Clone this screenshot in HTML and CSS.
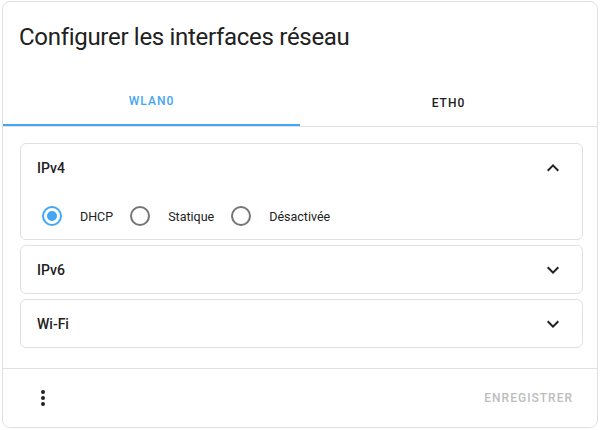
FILE: index.html
```html
<!DOCTYPE html>
<html lang="fr">
<head>
<meta charset="utf-8">
<link rel="stylesheet" href="styles.css">
</head>
<body>
<div class="dialog">
  <h2 class="title">Configurer les interfaces réseau</h2>
  <div class="tabs">
    <div class="tab active">WLAN0</div>
    <div class="tab">ETH0</div>
  </div>
  <div class="content">
    <div class="panel">
      <div class="panel-header">
        <span>IPv4</span>
        <svg class="chev" viewBox="0 0 24 24"><path d="M7.41 15.41L12 10.83l4.59 4.58L18 14l-6-6-6 6z"/></svg>
      </div>
      <div class="panel-body">
        <label class="radio"><span class="circle checked"></span><span class="lbl">DHCP</span></label>
        <label class="radio"><span class="circle"></span><span class="lbl">Statique</span></label>
        <label class="radio"><span class="circle"></span><span class="lbl">Désactivée</span></label>
      </div>
    </div>
    <div class="panel">
      <div class="panel-header">
        <span>IPv6</span>
        <svg class="chev" viewBox="0 0 24 24"><path d="M16.59 8.59L12 13.17 7.41 8.59 6 10l6 6 6-6z"/></svg>
      </div>
    </div>
    <div class="panel">
      <div class="panel-header">
        <span>Wi-Fi</span>
        <svg class="chev" viewBox="0 0 24 24"><path d="M16.59 8.59L12 13.17 7.41 8.59 6 10l6 6 6-6z"/></svg>
      </div>
    </div>
  </div>
  <div class="footer">
    <svg class="dots" viewBox="0 0 24 24"><path d="M12,16A2,2 0 0,1 14,18A2,2 0 0,1 12,20A2,2 0 0,1 10,18A2,2 0 0,1 12,16M12,10A2,2 0 0,1 14,12A2,2 0 0,1 12,14A2,2 0 0,1 10,12A2,2 0 0,1 12,10M12,4A2,2 0 0,1 14,6A2,2 0 0,1 12,8A2,2 0 0,1 10,6A2,2 0 0,1 12,4Z"/></svg>
    <button class="save" disabled>ENREGISTRER</button>
  </div>
</div>
</body>
</html>
```

FILE: styles.css
```css
html, body {
  margin: 0;
  padding: 0;
  background: #fff;
}
body {
  font-family: Roboto, "Liberation Sans", sans-serif;
  color: #212121;
}
.dialog {
  margin: 1px 0 0 2px;
  width: 596px;
  height: 427px;
  box-sizing: border-box;
  border: 1px solid #e0e0e0;
  border-radius: 8px;
  background: #fff;
  display: flex;
  flex-direction: column;
}
.title {
  margin: 0;
  padding: 19px 16px 0;
  font-size: 24px;
  font-weight: 400;
  line-height: 32px;
  letter-spacing: -0.3px;
  color: #212121;
}
.tabs {
  margin-top: 25px;
  display: flex;
  border-bottom: 1px solid #e0e0e0;
}
.tab {
  flex: 1;
  height: 48px;
  box-sizing: border-box;
  display: flex;
  align-items: center;
  justify-content: center;
  font-size: 12px;
  font-weight: 500;
  letter-spacing: 1px;
  color: #212121;
  padding-top: 2px;
}
.tab.active {
  color: #42a5f5;
  border-bottom: 2px solid #42a5f5;
  padding-top: 0;
}
.content {
  padding: 16px 14px 20px 17px;
  display: flex;
  flex-direction: column;
  gap: 5px;
}
.panel {
  border: 1px solid #e0e0e0;
  border-radius: 6px;
}
.panel-header {
  height: 47px;
  display: flex;
  align-items: center;
  justify-content: space-between;
  padding: 0 17px 0 16px;
  font-size: 14px;
  font-weight: 500;
  color: #212121;
}
.chev {
  width: 24px;
  height: 24px;
  fill: #212121;
}
.panel-body {
  display: flex;
  align-items: center;
  height: 40px;
  padding: 5px 0 3px 21px;
  gap: 17px;
}
.radio {
  display: flex;
  align-items: center;
  gap: 18px;
  font-size: 12.5px;
  color: #212121;
}
.circle {
  width: 20px;
  height: 20px;
  box-sizing: border-box;
  border: 2px solid #757575;
  border-radius: 50%;
  display: flex;
  align-items: center;
  justify-content: center;
}
.circle.checked {
  border-color: #42a5f5;
}
.circle.checked::after {
  content: "";
  width: 10px;
  height: 10px;
  border-radius: 50%;
  background: #42a5f5;
}
.footer {
  flex: 1;
  border-top: 1px solid #e0e0e0;
  display: flex;
  align-items: center;
  justify-content: space-between;
  padding: 0 24px 0 28px;
}
.dots {
  width: 24px;
  height: 24px;
  fill: #212121;
}
.save {
  border: none;
  background: none;
  padding: 0;
  font-family: Roboto, "Liberation Sans", sans-serif;
  font-size: 12px;
  font-weight: 500;
  letter-spacing: 1px;
  color: #bdbdbd;
}
```
